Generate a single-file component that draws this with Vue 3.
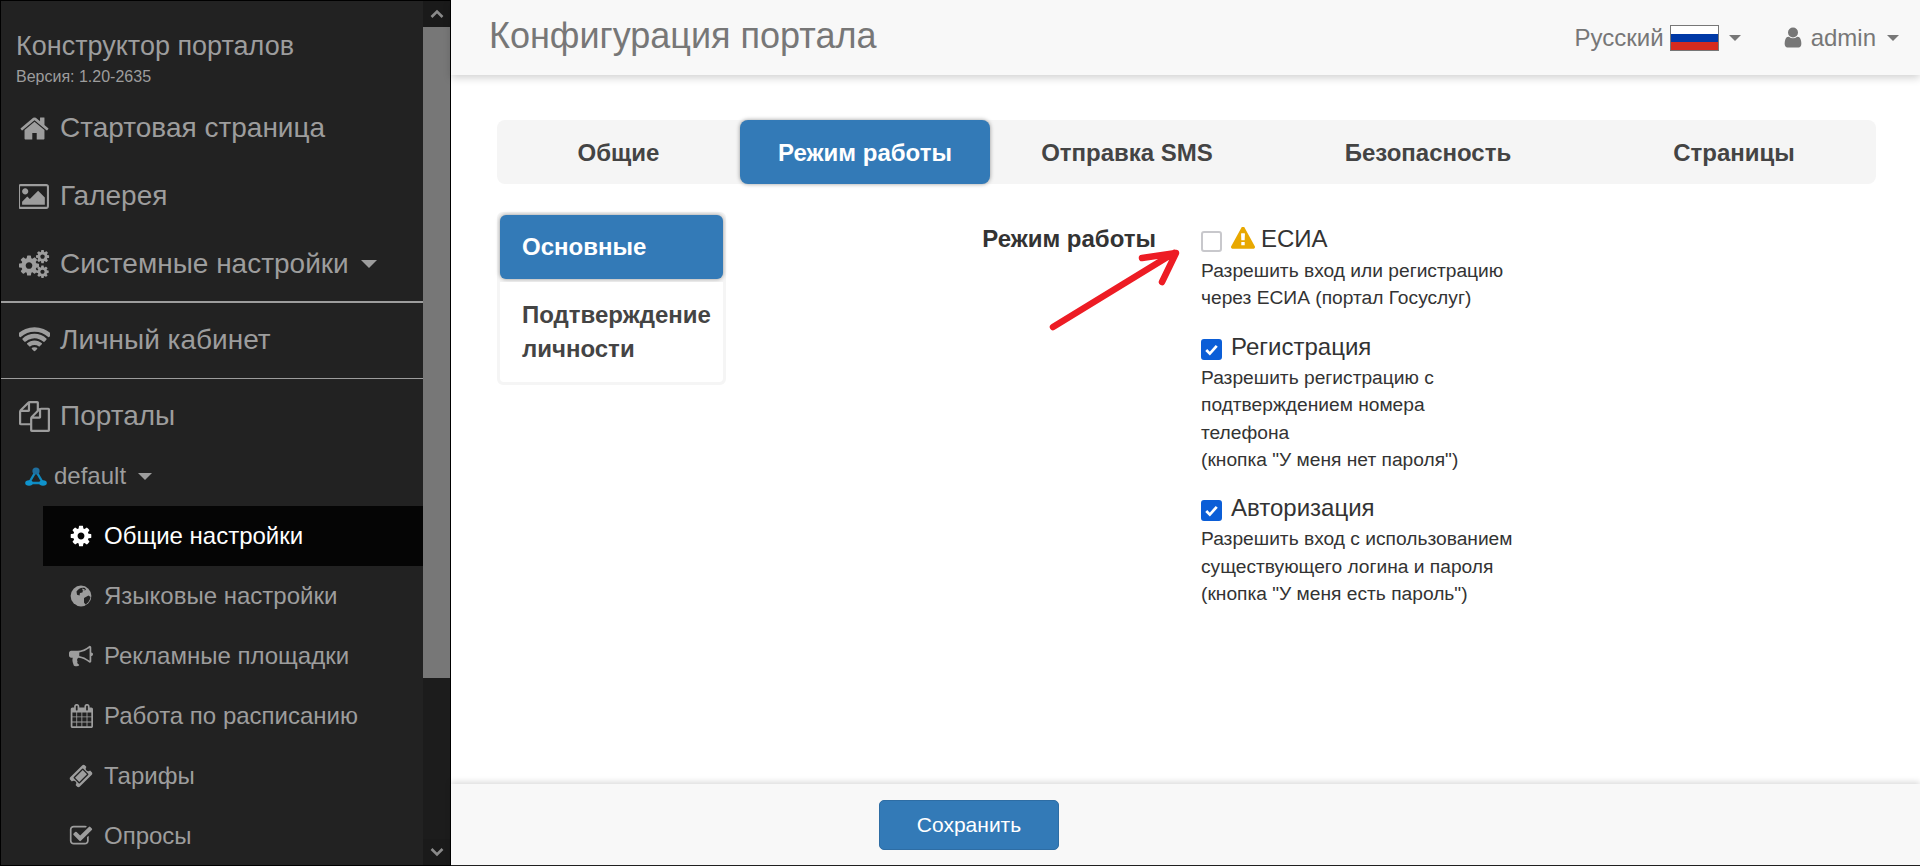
<script setup>
const P = {
  home: 'M1472 992v480q0 26-19 45t-45 19h-384v-384h-256v384h-384q-26 0-45-19t-19-45v-480q0-1 .5-3t.5-3l575-474 575 474q1 2 1 6zm223-69l-62 74q-8 9-21 11h-3q-13 0-21-7l-692-577-692 577q-12 8-24 7-13-2-21-11l-62-74q-8-10-7-23.5t11-21.5l719-599q32-26 76-26t76 26l244 204v-195q0-14 9-23t23-9h192q14 0 23 9t9 23v408l219 182q10 8 11 21.5t-7 23.5z',
  cog: 'M1152 896q0-106-75-181t-181-75-181 75-75 181 75 181 181 75 181-75 75-181zm512-109v222q0 12-8 23t-20 13l-185 28q-19 54-39 91 35 50 107 138 10 12 10 25t-9 23q-27 37-99 108t-94 71q-12 0-26-9l-138-108q-44 23-91 38-16 136-29 186-7 28-36 28h-222q-14 0-24.5-8.5t-11.5-21.5l-28-184q-49-16-90-37l-141 107q-10 9-25 9-14 0-25-11-126-114-165-168-7-10-7-23 0-12 8-23 15-21 51-66.5t54-70.5q-27-50-41-99l-183-27q-13-2-21-12.5t-8-23.5v-222q0-12 8-23t19-13l186-28q14-46 39-92-40-57-107-138-10-12-10-24 0-10 9-23 26-36 98.5-107.5t94.5-71.5q13 0 26 10l138 107q44-23 91-38 16-136 29-186 7-28 36-28h222q14 0 24.5 8.5t11.5 21.5l28 184q49 16 90 37l142-107q9-9 24-9 13 0 25 10 129 119 165 170 7 8 7 22 0 12-8 23-15 21-51 66.5t-54 70.5q26 50 41 98l183 28q13 2 21 12.5t8 23.5z',
  wifi: 'M896 1523q-20 0-93-73.5t-73-93.5q0-32 62.5-54t103.5-22 103.5 22 62.5 54q0 20-73 93.5t-93 73.5zm270-271q-2 0-40-25t-101.5-50-128.5-25-128.5 25-101 50-40.5 25q-18 0-93.5-75t-75.5-93q0-13 10-23 78-77 196-121t233-44 233 44 196 121q10 10 10 23 0 18-75.5 93t-93.5 75zm273-272q-11 0-23-8-136-105-252-154.5t-268-49.5q-85 0-170.5 22t-149 53-113.5 62-79 53-31 22q-17 0-92-75t-75-93q0-12 10-22 132-132 320-205t380-73 380 73 320 205q10 10 10 22 0 18-75 93t-92 75zm271-271q-11 0-22-9-179-157-371.5-236.5t-420.5-79.5-420.5 79.5-371.5 236.5q-11 9-22 9-17 0-92.5-75t-75.5-93q0-13 10-23 187-186 445-288t527-102 527 102 445 288q10 10 10 23 0 18-75.5 93t-92.5 75z',
  picture: 'M576 576q0 80-56 136t-136 56-136-56-56-136 56-136 136-56 136 56 56 136zm1024 384v448h-1408v-192l320-320 160 160 512-512zm96-704h-1600q-13 0-22.5 9.5t-9.5 22.5v1216q0 13 9.5 22.5t22.5 9.5h1600q13 0 22.5-9.5t9.5-22.5v-1216q0-13-9.5-22.5t-22.5-9.5zm160 32v1216q0 66-47 113t-113 47h-1600q-66 0-113-47t-47-113v-1216q0-66 47-113t113-47h1600q66 0 113 47t47 113z',
  files: 'M1696 384q40 0 68 28t28 68v1216q0 40-28 68t-68 28h-960q-40 0-68-28t-28-68v-288h-544q-40 0-68-28t-28-68v-672q0-40 20-88t48-76l408-408q28-28 76-48t88-20h416q40 0 68 28t28 68v328q68-40 128-40h416zm-544 213l-299 299h299v-299zm-640-384l-299 299h299v-299zm196 647l316-316v-416h-384v416q0 40-28 68t-68 28h-416v640h512v-256q0-40 20-88t48-76zm956 804v-1152h-384v416q0 40-28 68t-68 28h-416v640h896z',
  bullhorn: 'M1664 640q53 0 90.5 37.5t37.5 90.5-37.5 90.5-90.5 37.5v384q0 52-38 90t-90 38q-417-347-812-380-58 19-91 66t-31 100.5 40 92.5q-20 33-23 65.5t6 58 33.5 55 48 50 61.5 50.5q-29 58-111.5 83t-168.5 11.5-132-55.5q-7-23-29.5-87.5t-32-94.5-23-89-15-101 3.5-98.5 22-110.5h-122q-66 0-113-47t-47-113v-192q0-66 47-113t113-47h480q435 0 896-384 52 0 90 38t38 90v384zm-128 604v-954q-394 302-768 343v270q377 42 768 341z',
  calendar: 'M192 1664h288v-288h-288v288zm352 0h320v-288h-320v288zm-352-352h288v-320h-288v320zm352 0h320v-320h-320v320zm-352-384h288v-288h-288v288zm736 736h320v-288h-320v288zm-384-736h320v-288h-320v288zm768 736h288v-288h-288v288zm-384-352h320v-320h-320v320zm-352-864v-288q0-13-9.5-22.5t-22.5-9.5h-64q-13 0-22.5 9.5t-9.5 22.5v288q0 13 9.5 22.5t22.5 9.5h64q13 0 22.5-9.5t9.5-22.5zm736 864h288v-320h-288v320zm-384-384h320v-288h-320v288zm384 0h288v-288h-288v288zm32-480v-288q0-13-9.5-22.5t-22.5-9.5h-64q-13 0-22.5 9.5t-9.5 22.5v288q0 13 9.5 22.5t22.5 9.5h64q13 0 22.5-9.5t9.5-22.5zm384-64v1280q0 52-38 90t-90 38h-1408q-52 0-90-38t-38-90v-1280q0-52 38-90t90-38h128v-96q0-66 47-113t113-47h64q66 0 113 47t47 113v96h384v-96q0-66 47-113t113-47h64q66 0 113 47t47 113v96h128q52 0 90 38t38 90z',
  ticket: 'M1024 452l316 316-572 572-316-316zm-211 979l618-618q19-19 19-45t-19-45l-362-362q-18-18-45-18t-45 18l-618 618q-19 19-19 45t19 45l362 362q18 18 45 18t45-18zm889-637l-907 908q-37 37-90.5 37t-90.5-37l-126-126q56-56 56-136t-56-136-136-56-136 56l-125-126q-37-37-37-90.5t37-90.5l907-906q37-37 90.5-37t90.5 37l125 125q-56 56-56 136t56 136 136 56 136-56l126 125q37 37 37 90.5t-37 90.5z',
  check: 'M1472 930v318q0 119-84.5 203.5t-203.5 84.5h-832q-119 0-203.5-84.5t-84.5-203.5v-832q0-119 84.5-203.5t203.5-84.5h832q63 0 117 25 15 7 18 23 3 17-9 29l-49 49q-10 10-23 10-3 0-9-2-23-6-45-6h-832q-66 0-113 47t-47 113v832q0 66 47 113t113 47h832q66 0 113-47t47-113v-254q0-13 9-22l64-64q10-10 23-10 6 0 12 3 20 8 20 29zm231-489l-814 814q-24 24-57 24t-57-24l-430-430q-24-24-24-57t24-57l110-110q24-24 57-24t57 24l263 263 647-647q24-24 57-24t57 24l110 110q24 24 24 57t-24 57z',
  warning: 'M1024 1375v-190q0-14-9.5-23.5t-22.5-9.5h-192q-13 0-22.5 9.5t-9.5 23.5v190q0 14 9.5 23.5t22.5 9.5h192q13 0 22.5-9.5t9.5-23.5zm-2-374l18-459q0-12-10-19-13-11-24-11h-220q-11 0-24 11-10 7-10 21l17 457q0 10 10 16.5t24 6.5h185q14 0 23.5-6.5t10.5-16.5zm-14-934l768 1408q35 63-2 126-17 29-46.5 46t-63.5 17h-1536q-34 0-63.5-17t-46.5-46q-37-63-2-126l768-1408q17-31 47-49t65-18 65 18 47 49z',
  user: 'M1536 1399q0 109-62.5 187t-150.5 78h-854q-88 0-150.5-78t-62.5-187q0-85 8.5-160.5t31.5-152 58.5-131 94-89 134.5-34.5q131 128 313 128t313-128q76 0 134.5 34.5t94 89 58.5 131 31.5 152 8.5 160.5zm-256-887q0 159-112.5 271.5t-271.5 112.5-271.5-112.5-112.5-271.5 112.5-271.5 271.5-112.5 271.5 112.5 112.5 271.5z'
}
const mainTabs = ['Общие', 'Режим работы', 'Отправка SMS', 'Безопасность', 'Страницы']
const subItems = [
  { label: 'Общие настройки', active: true, icon: 'cog', vb: '0 0 1792 1792' },
  { label: 'Языковые настройки', icon: 'globe' },
  { label: 'Рекламные площадки', icon: 'bullhorn', vb: '0 0 1792 1792' },
  { label: 'Работа по расписанию', icon: 'calendar', vb: '0 0 1664 1792' },
  { label: 'Тарифы', icon: 'ticket', vb: '0 0 1792 1792' },
  { label: 'Опросы', icon: 'check', vb: '0 0 1792 1792' }
]
const options = [
  { title: 'ЕСИА', warn: true, checked: false, desc: ['Разрешить вход или регистрацию', 'через ЕСИА (портал Госуслуг)'] },
  { title: 'Регистрация', checked: true, desc: ['Разрешить регистрацию с', 'подтверждением номера', 'телефона', '(кнопка "У меня нет пароля")'] },
  { title: 'Авторизация', checked: true, desc: ['Разрешить вход с использованием', 'существующего логина и пароля', '(кнопка "У меня есть пароль")'] }
]
</script>

<template>
  <div class="page">
    <aside class="sidebar">
      <nav class="menu">
        <div class="brand">
          <div class="brand-name">Конструктор порталов</div>
          <div class="brand-ver">Версия: 1.20-2635</div>
        </div>
        <a class="item"><svg class="ic" viewBox="0 0 1792 1792"><path :d="P.home" /></svg>Стартовая страница</a>
        <a class="item"><svg class="ic" viewBox="0 0 1920 1792"><path :d="P.picture" /></svg>Галерея</a>
        <a class="item">
          <svg class="ic" viewBox="0 0 1920 1792">
            <path :d="P.cog" transform="translate(-103 237) scale(.807)" />
            <path :d="P.cog" transform="translate(982 -68) scale(.53)" />
            <path :d="P.cog" transform="translate(1006 896) scale(.5)" />
          </svg>
          Системные настройки<i class="caret big"></i>
        </a>
        <hr class="rule thick" />
        <a class="item"><svg class="ic" viewBox="0 0 1792 1792"><path :d="P.wifi" /></svg>Личный кабинет</a>
        <hr class="rule thin" />
        <a class="item"><svg class="ic" viewBox="0 0 1792 1792"><path :d="P.files" /></svg>Порталы</a>
        <a class="portal">
          <svg class="net" viewBox="0 0 22 20">
            <path d="M11 4L4 16M11 4l7 12M5 16h12" stroke="#0f8ac0" stroke-width="2.4" fill="none" />
            <circle cx="11" cy="4" r="3.6" fill="#1f6f9f" />
            <ellipse cx="4" cy="16" rx="3.8" ry="2.8" fill="#0f93cc" />
            <ellipse cx="18" cy="16" rx="3.8" ry="2.8" fill="#0f93cc" />
          </svg>
          default<i class="caret"></i>
        </a>
        <a v-for="s in subItems" :key="s.label" class="sub" :class="{ on: s.active }">
          <svg v-if="s.icon === 'globe'" class="sic" viewBox="0 0 24 24">
            <circle cx="12" cy="12" r="10.4" />
            <path class="cut" d="M7.5 7.5c2-3 5-4.5 8.500-3.500l1 2-3 .6-.6 2-2.400.4-.5 2.400-2.500-.6zM15 14l4.500-2.500 2 1.500c-.6 3.500-2.500 6-5 7.500l-1.500-2z" />
            <path d="M13 4.500l3 1-2 1.500zM5 11l2-1 3 3 3 .5.5 3-2 3-1.500-3-2.500-2.500z" />
          </svg>
          <svg v-else class="sic" :viewBox="s.vb"><path :d="P[s.icon]" /></svg>
          {{ s.label }}
        </a>
      </nav>
      <div class="scrollbar">
        <button class="arrow"><svg viewBox="0 0 14 10"><path d="M1.500 8L7 2.500 12.500 8" /></svg></button>
        <div class="track"><div class="thumb"></div></div>
        <button class="arrow"><svg viewBox="0 0 14 10"><path d="M1.500 2L7 7.500 12.500 2" /></svg></button>
      </div>
    </aside>

    <main class="main">
      <header class="topbar">
        <h1 class="title">Конфигурация портала</h1>
        <div class="lang">
          Русский
          <span class="flag"><i></i><i></i><i></i></span>
          <i class="caret dark"></i>
        </div>
        <div class="account">
          <svg class="usr" viewBox="128 128 1536 1536"><path :d="P.user" /></svg>
          admin
          <i class="caret dark"></i>
        </div>
      </header>

      <section class="content">
        <div class="tabs">
          <a v-for="(t, i) in mainTabs" :key="t" class="tab" :class="{ on: i === 1 }">{{ t }}</a>
        </div>
        <div class="body">
          <div class="pills">
            <a class="pill on">Основные</a>
            <a class="pill">Подтверждение личности</a>
          </div>
          <div class="form-label">Режим работы</div>
          <div class="options">
            <div v-for="o in options" :key="o.title" class="opt">
              <label class="opt-head" :class="{ warned: o.warn }">
                <span class="box" :class="{ checked: o.checked }">
                  <svg v-if="o.checked" viewBox="0 0 20 20"><path d="M5 10.500l3.400 3.400L15 6.500" /></svg>
                </span>
                <svg v-if="o.warn" class="warn" viewBox="0 0 1792 1664"><path :d="P.warning" transform="translate(0 -64)" /></svg>
                {{ o.title }}
              </label>
              <div v-for="d in o.desc" :key="d" class="desc">{{ d }}</div>
            </div>
          </div>
        </div>
        <svg class="red-arrow" viewBox="0 0 140 90">
          <path d="M6 82L127 8M95 13l34-5-14 29" />
        </svg>
      </section>

      <footer class="footer">
        <button class="save">Сохранить</button>
      </footer>
    </main>
  </div>
</template>

<style>
html, body { margin: 0; padding: 0; background: #fff; }
</style>

<style scoped>
* { box-sizing: border-box; }
.page {
  display: flex;
  height: 866px;
  width: 1920px;
  overflow: hidden;
  font-family: "Liberation Sans", Arial, sans-serif;
  color: #333;
}

.sidebar {
  width: 451px;
  flex: none;
  display: flex;
  background: #222;
  border: 1px solid #000;
}
.menu {
  width: 422px;
  flex: none;
  overflow: hidden;
  color: #9d9d9d;
}
.brand { height: 93px; padding: 30px 0 0 15px; }
.brand-name { font-size: 27px; line-height: 31px; height: 36px; }
.brand-ver { font-size: 16px; line-height: 20px; }

.item {
  display: flex;
  align-items: center;
  height: 68px;
  font-size: 28px;
  padding-left: 18px;
}
.ic { width: 31px; height: 31px; fill: #9d9d9d; margin-right: 10px; flex: none; }
.rule { border: 0; height: 1px; background: #9d9d9d; }
.rule.thick { height: 2px; margin: 3px 0; }
.rule.thin { margin: 4px 0 3px; }

.caret {
  display: inline-block;
  width: 0;
  height: 0;
  border-left: 7px solid transparent;
  border-right: 7px solid transparent;
  border-top: 7px solid #9d9d9d;
  margin-left: 12px;
}
.caret.big { border-left-width: 8px; border-right-width: 8px; border-top-width: 8px; }
.caret.dark { border-top-color: #777; border-left-width: 6px; border-right-width: 6px; border-top-width: 6px; margin-left: 10px; }
.account .caret.dark { margin-left: 11px; }

.portal {
  display: flex;
  align-items: center;
  height: 52px;
  margin-bottom: 4px;
  padding-left: 24px;
  font-size: 24px;
}
.net { width: 22px; height: 20px; margin-right: 7px; margin-top: 2px; }

.sub {
  display: flex;
  align-items: center;
  height: 60px;
  margin-left: 42px;
  padding-left: 26px;
  font-size: 24px;
  color: #9d9d9d;
}
.sub.on { background: #050505; color: #fff; }
.sic { width: 24px; height: 24px; fill: #9d9d9d; margin-right: 11px; flex: none; }
.sub.on .sic { fill: #fff; }
.sub .cut { fill: #222; }

.scrollbar {
  width: 27px;
  flex: none;
  display: flex;
  flex-direction: column;
  background: #1c1c1c;
}
.arrow {
  height: 26px;
  flex: none;
  padding: 0;
  border: 0;
  background: #1a1a1a;
  display: flex;
  align-items: center;
  justify-content: center;
}
.arrow svg { width: 14px; height: 10px; fill: none; stroke: #8a8a8a; stroke-width: 2.600; }
.track { flex: 1; }
.thumb { height: 651px; background: #777; }

.main { flex: 1; min-width: 0; display: flex; flex-direction: column; border-bottom: 1px solid #222; }

.topbar {
  position: relative;
  z-index: 2;
  height: 75px;
  flex: none;
  display: flex;
  align-items: center;
  background: #f8f8f8;
  box-shadow: 0 3px 8px rgba(0, 0, 0, .18);
  padding: 0 21px 0 38px;
  color: #777;
  font-size: 24px;
}
.title { margin: -4px auto 0 0; font-size: 36px; font-weight: 400; color: #777; }
.lang, .account { display: flex; align-items: center; }
.lang { margin-right: 42px; }
.flag {
  display: flex;
  flex-direction: column;
  width: 49px;
  height: 26px;
  margin-left: 6px;
  border: 1px solid #777;
}
.flag i { flex: 1; }
.flag i:nth-child(1) { background: #fff; }
.flag i:nth-child(2) { background: #0039a6; }
.flag i:nth-child(3) { background: #d52b1e; }
.usr { width: 20px; height: 21px; fill: #777; margin-right: 8px; }

.content { position: relative; flex: 1; padding: 45px 44px 0 46px; min-height: 0; }
.tabs {
  display: grid;
  grid-template-columns: 243px 250px 274px 328px 284px;
  height: 64px;
  background: #f5f5f5;
  border-radius: 8px;
}
.tab {
  display: flex;
  align-items: center;
  justify-content: center;
  padding-top: 1px;
  font-size: 24px;
  font-weight: 700;
  color: #444;
  border-radius: 8px;
}
.tab.on { background: #337ab7; color: #fff; box-shadow: 0 0 4px rgba(0, 0, 0, .4); }

.body { display: flex; margin-top: 28px; align-items: flex-start; }
.pills {
  width: 229px;
  flex: none;
  border: 3px solid #f5f5f5;
  border-radius: 6px;
  display: flex;
  flex-direction: column;
  gap: 3px;
  background: #f5f5f5;
}
.pill {
  display: block;
  background: #fff;
  font-size: 24px;
  line-height: 34px;
  font-weight: 700;
  color: #444;
  padding: 16px 4px 16px 22px;
  border-radius: 0 0 4px 4px;
}
.pill.on {
  background: #337ab7;
  color: #fff;
  border-radius: 6px;
  padding: 15px 4px 15px 22px;
  box-shadow: 0 0 4px rgba(0, 0, 0, .4);
}
.form-label {
  width: 430px;
  flex: none;
  text-align: right;
  font-size: 24px;
  font-weight: 700;
  line-height: 25px;
  margin-top: 14px;
  color: #333;
}
.options { margin-left: 45px; padding-top: 14px; }
.opt { margin-bottom: 22px; }
.opt-head {
  display: flex;
  align-items: center;
  height: 25px;
  font-size: 24px;
  line-height: 25px;
  color: #333;
  margin-bottom: 5px;
}
.opt-head.warned { margin-bottom: 6px; }
.box {
  width: 21px;
  height: 21px;
  border-radius: 3px;
  border: 2px solid #c8c8cc;
  background: #fff;
  margin-right: 9px;
  margin-top: 6px;
  flex: none;
}
.box.checked { background: #0b5ed7; border-color: #0b5ed7; position: relative; }
.box svg { position: absolute; left: -2px; top: -2px; width: 21px; height: 21px; fill: none; stroke: #fff; stroke-width: 2.600; }
.warn { width: 24px; height: 23px; fill: #e8a800; margin-right: 6px; }
.desc { font-size: 19.200px; line-height: 27.400px; color: #333; }

.red-arrow {
  position: absolute;
  left: 596px;
  top: 170px;
  width: 140px;
  height: 90px;
  fill: none;
  stroke: #ed1c24;
  stroke-width: 6.500;
  stroke-linecap: round;
  stroke-linejoin: round;
}

.footer {
  position: relative;
  height: 81px;
  flex: none;
  background: #f8f8f8;
  box-shadow: 0 -2px 6px rgba(0, 0, 0, .15);
  padding: 16px 0 0 428px;
}
.save {
  width: 180px;
  height: 50px;
  background: #337ab7;
  color: #fff;
  border: 1px solid #2e6da4;
  border-radius: 5px;
  font-family: inherit;
  font-size: 21px;
  padding: 0;
}
</style>
